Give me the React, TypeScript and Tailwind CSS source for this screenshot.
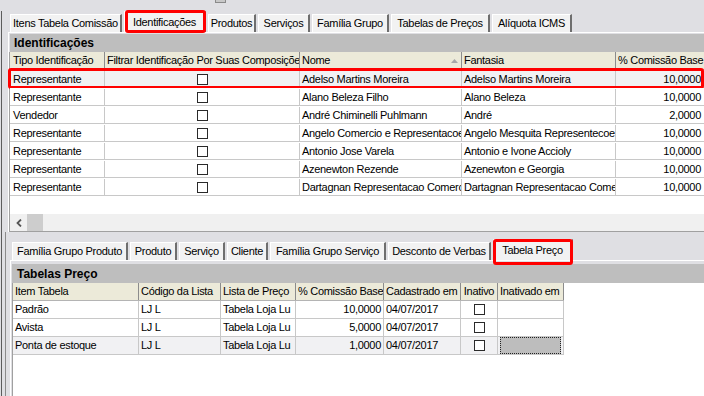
import React from "react";

const topTabs = [
  { label: "Itens Tabela Comissão", w: "w-[112px]" },
  { label: "Identificações", w: "w-[82px]", active: true },
  { label: "Produtos", w: "w-[48px]" },
  { label: "Serviços", w: "w-[52px]" },
  { label: "Família Grupo", w: "w-[77px]" },
  { label: "Tabelas de Preços", w: "w-[99px]" },
  { label: "Alíquota ICMS", w: "w-[80px]" },
];

const bottomTabs = [
  { label: "Família Grupo Produto", w: "w-[116px]" },
  { label: "Produto", w: "w-[47px]" },
  { label: "Serviço", w: "w-[46px]" },
  { label: "Cliente", w: "w-[41px]" },
  { label: "Família Grupo Serviço", w: "w-[116px]" },
  { label: "Desconto de Verbas", w: "w-[103px]" },
  { label: "Tabela Preço", w: "w-[80px]", active: true },
];

const identificacoes = [
  ["Representante", "Adelso Martins Moreira", "Adelso Martins Moreira", "10,0000"],
  ["Representante", "Alano Beleza Filho", "Alano Beleza", "10,0000"],
  ["Vendedor", "André Chiminelli Puhlmann", "André", "2,0000"],
  ["Representante", "Angelo Comercio e Representacoes", "Angelo Mesquita Representecoes", "10,0000"],
  ["Representante", "Antonio Jose Varela", "Antonio e Ivone Accioly", "10,0000"],
  ["Representante", "Azenewton Rezende", "Azenewton e Georgia", "10,0000"],
  ["Representante", "Dartagnan Representacao Comercial", "Dartagnan Representacao Comercial", "10,0000"],
];

const precos = [
  ["Padrão", "LJ L", "Tabela Loja Lu", "10,0000", "04/07/2017"],
  ["Avista", "LJ L", "Tabela Loja Lu", "5,0000", "04/07/2017"],
  ["Ponta de estoque", "LJ L", "Tabela Loja Lu", "1,0000", "04/07/2017"],
];

const Check = () => (
  <span className="inline-block w-[11px] h-[11px] border border-[#2a2a2a] bg-white" />
);

function Tab({ label, w, active, mark }: { label: string; w: string; active?: boolean; mark: string }) {
  return (
    <div
      className={
        "relative flex items-center justify-center whitespace-nowrap bg-[#f2f2f2] border-l border-t border-white border-r-2 border-r-[#6e6e6e] " +
        w +
        (active ? " h-[21px]" : " h-[18px]")
      }
    >
      {label}
      {active && <span className={"absolute border-[3px] border-[#ff0000] rounded-[3px] " + mark} />}
    </div>
  );
}

const hd = "h-full flex items-center px-[2px] border-r border-[#8c8c8c] overflow-hidden whitespace-nowrap";
const cl = "h-full flex items-center px-[2px] border-r border-[#c8c8c8] overflow-hidden whitespace-nowrap";

export default function App() {
  return (
    <div className="w-[704px] h-[396px] overflow-hidden flex bg-[#dfdfe3] text-black text-[11px] tracking-[-0.3px] font-['Liberation_Sans',_Arial,_sans-serif]">
      {/* window edges */}
      <div className="w-[8px] flex flex-col shrink-0">
        <div className="h-[11px]" />
        <div className="h-[221px] ml-[1px] border-l border-[#5c5c5c]" />
        <div className="flex-1 ml-[1px] border-l border-[#5c5c5c]">
          <div className="h-full ml-[3px] border-l border-[#8a8a8a]" />
        </div>
      </div>

      <div className="flex-1 flex flex-col min-w-0">
        <div className="h-[12px] flex items-start">
          <div className="ml-[207px] w-[11px] h-[3px] bg-[#c8c8c8] border-x border-b border-[#8a8a8a]" />
        </div>

        {/* top tabs */}
        <div className="h-[20px] pl-[2px] flex items-end gap-[2px]">
          {topTabs.map((t) => (
            <Tab key={t.label} {...t} mark="left-[0px] -right-[2px] -top-[2px] -bottom-[1px]" />
          ))}
        </div>

        {/* Identificações page */}
        <div className="h-[200px] border-t border-l border-white flex flex-col">
          <div className="h-[1px]" />
          <div className="h-[18px] ml-[1px] bg-[#bebebe] flex items-center pl-[4px] font-bold text-[12px] tracking-normal">
            Identificações
          </div>
          <div className="flex-1 flex flex-col bg-white border-l border-[#a0a0a0]">
            <div className="h-[18px] flex bg-[#ecead9] border-b border-[#b4b4b4]">
              <div className={hd + " w-[95px] pl-[3px]"}>Tipo Identificação</div>
              <div className={hd + " w-[195px]"}>Filtrar Identificação Por Suas Composições</div>
              <div className={hd + " w-[162px]"}>
                <span className="flex-1">Nome</span>
                <svg width="7" height="4" viewBox="0 0 7 4" className="mr-[1px] shrink-0">
                  <path d="M0 4 L3.5 0 L7 4 Z" fill="#a8a8a8" />
                </svg>
              </div>
              <div className={hd + " w-[154px]"}>Fantasia</div>
              <div className={hd + " flex-1 border-r-0"}>% Comissão Base</div>
            </div>
            {identificacoes.map((r, i) => (
              <div
                key={i}
                className={"relative h-[18px] flex pt-[1px] border-b border-[#c8c8c8] " + (i === 0 ? "bg-[#f1f1f3]" : "bg-white")}
              >
                <div className={cl + " w-[95px] pl-[3px]"}>{r[0]}</div>
                <div className={cl + " w-[195px] justify-center"}>
                  <Check />
                </div>
                <div className={cl + " w-[162px]"}>{r[1]}</div>
                <div className={cl + " w-[154px]"}>{r[2]}</div>
                <div className={cl + " flex-1 justify-end pr-[3px] border-r-0"}>{r[3]}</div>
                {i === 0 && (
                  <span className="absolute -left-[2px] right-0 -top-[2px] -bottom-[2px] border-[3px] border-[#ff0000] rounded-[3px]" />
                )}
              </div>
            ))}
            <div className="flex-1" />
            <div className="h-[18px] flex items-stretch bg-[#f0f0f0] border-b border-[#a0a0a0]">
              <div className="w-[17px] flex items-center justify-center">
                <svg width="6" height="8" viewBox="0 0 6 8">
                  <path d="M5 0.5 L1.5 4 L5 7.5" fill="none" stroke="#555" strokeWidth="1.8" />
                </svg>
              </div>
              <div className="w-[16px] bg-[#cdcdcd]" />
            </div>
          </div>
        </div>

        {/* bottom tabs */}
        <div className="h-[28px] pl-[4px] flex items-end gap-[2px]">
          {bottomTabs.map((t) => (
            <Tab key={t.label} {...t} mark="-left-[1px] -right-[2px] -top-[1px] -bottom-[5px]" />
          ))}
        </div>

        {/* Tabela Preço page */}
        <div className="flex-1 ml-[2px] border-t border-l border-white flex flex-col">
          <div className="h-[3px]" />
          <div className="h-[19px] ml-[1px] bg-[#bebebe] flex items-center pl-[5px] font-bold text-[12px] tracking-normal">
            Tabelas Preço
          </div>
          <div className="flex-1 ml-[1px] bg-white border-l border-[#a0a0a0]">
            <div className="h-[18px] flex">
              <div className="flex bg-[#ecead9] border-b border-[#b4b4b4]">
                <div className={hd + " w-[126px]"}>Item Tabela</div>
                <div className={hd + " w-[82px]"}>Código da Lista</div>
                <div className={hd + " w-[75px]"}>Lista de Preço</div>
                <div className={hd + " w-[88px]"}>% Comissão Base</div>
                <div className={hd + " w-[77px]"}>Cadastrado em</div>
                <div className={hd + " w-[37px] px-0 justify-center"}>Inativo</div>
                <div className={hd + " w-[66px]"}>Inativado em</div>
              </div>
            </div>
            {precos.map((r, i) => {
              const sel = i === 2;
              return (
                <div key={i} className="h-[18px] flex">
                  <div className={"flex border-b border-[#c8c8c8] " + (sel ? "bg-[#f1f1f3]" : "bg-white")}>
                    <div className={cl + " w-[126px]"}>{r[0]}</div>
                    <div className={cl + " w-[82px]"}>{r[1]}</div>
                    <div className={cl + " w-[75px]"}>{r[2]}</div>
                    <div className={cl + " w-[88px] justify-end"}>{r[3]}</div>
                    <div className={cl + " w-[77px]"}>{r[4]}</div>
                    <div className={cl + " w-[37px] justify-center"}>
                      <Check />
                    </div>
                    <div className={cl + " w-[66px] p-0"}>
                      {sel && <div className="w-full h-full bg-[#bdbdbd] border border-dotted border-[#222]" />}
                    </div>
                  </div>
                </div>
              );
            })}
          </div>
        </div>
      </div>
    </div>
  );
}
